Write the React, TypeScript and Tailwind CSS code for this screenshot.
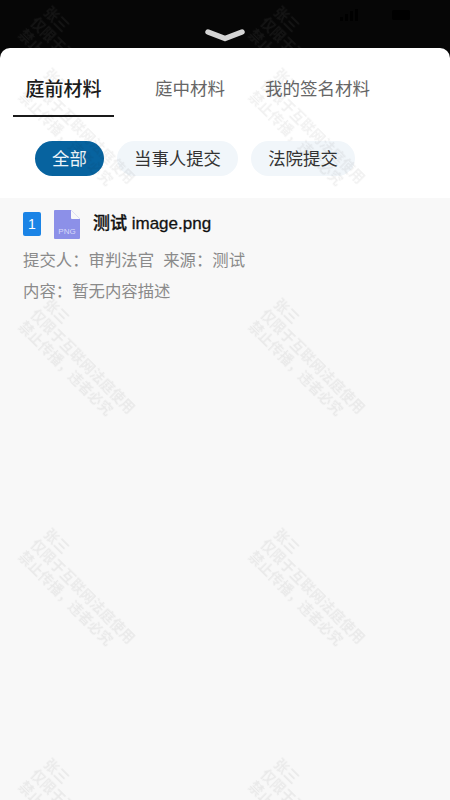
const cjk = "font-['Noto_Sans_CJK_SC','Noto_Sans',sans-serif]";

function Watermark({ color, rows, top }: { color: string; rows: number; top: string }) {
  const cells = Array.from({ length: rows * 2 });
  return (
    <div className={`pointer-events-none absolute left-[-31px] grid grid-cols-[230px_230px] auto-rows-[230px] ${top}`}>
      {cells.map((_, i) => (
        <div key={i} className="flex items-center justify-center">
          <div className={`w-[142px] shrink-0 rotate-45 whitespace-nowrap text-[14px] leading-[17px] font-bold blur-[0.7px] ${color}`}>
            <div className="pl-[2px]">张三</div>
            <div>仅限于互联网法庭使用</div>
            <div>禁止传播，违者必究</div>
          </div>
        </div>
      ))}
    </div>
  );
}

function Pill({ label, active, className }: { label: string; active?: boolean; className: string }) {
  return (
    <div
      className={`flex h-[35px] items-center justify-center rounded-full text-[17.4px] ${
        active ? "bg-[#07639f] text-[#eef5fa]" : "bg-[#f1f6fa] text-[#333333]"
      } ${className}`}
    >
      {label}
    </div>
  );
}

export default function App() {
  return (
    <div className={`relative flex h-[800px] w-[450px] flex-col overflow-hidden bg-[#060606] ${cjk}`}>
      <Watermark color="text-white/[0.06]" rows={1} top="top-[-46px]" />

      <header className="relative flex h-[48px] shrink-0 items-end justify-center pb-[6px]">
        <svg width="40" height="14" viewBox="0 0 40 14" fill="none">
          <path d="M3 4 L20 10.5 L37 4" stroke="#d4d4d4" strokeWidth="5.5" strokeLinecap="round" strokeLinejoin="round" />
        </svg>
        <svg className="absolute right-[40px] top-[9px]" width="70" height="12" viewBox="0 0 70 12" fill="#000">
          <rect x="0" y="8" width="3" height="4" />
          <rect x="5" y="5" width="3" height="7" />
          <rect x="10" y="2" width="3" height="10" />
          <rect x="15" y="0" width="3" height="12" />
          <rect x="52" y="1" width="18" height="10" rx="2" />
        </svg>
      </header>

      <main className="relative flex min-h-0 flex-1 flex-col overflow-hidden rounded-t-[10px] bg-white">
        <nav className="flex h-[69px] shrink-0 items-start pl-[13px] pt-[24px]">
          <div className="flex h-[45px] w-[101px] justify-center border-b-[2.5px] border-[#1a1a1a]">
            <span className="text-[19px] leading-[32px] font-medium text-[#1c1c1c]">庭前材料</span>
          </div>
          <span className="ml-[41px] text-[17.5px] leading-[32px] text-[#666666]">庭中材料</span>
          <span className="ml-[40px] text-[17.5px] leading-[32px] text-[#666666]">我的签名材料</span>
        </nav>

        <div className="flex h-[81px] shrink-0 gap-[13px] pl-[35px] pt-[24px]">
          <Pill label="全部" active className="w-[69px]" />
          <Pill label="当事人提交" className="w-[121px]" />
          <Pill label="法院提交" className="w-[104px]" />
        </div>

        <section className="flex-1 bg-[#f8f8f8] pl-[23px] pt-[12px]">
          <div className="flex h-[28px] items-center">
            <div className="flex h-[24px] w-[18px] items-center justify-center rounded-[2px] bg-[#1b84e6] font-['Liberation_Sans',sans-serif] text-[14px] text-white">
              1
            </div>
            <div className="relative ml-[13px] h-[29px] w-[26px]">
              <svg width="26" height="29" viewBox="0 0 26 29">
                <path d="M1 0 H17 L26 9 V28 a1 1 0 0 1 -1 1 H1 a1 1 0 0 1 -1 -1 V1 a1 1 0 0 1 1 -1 Z" fill="#8c90e8" />
                <path d="M17 0 L26 9 H18 a1 1 0 0 1 -1 -1 Z" fill="#f8f8f8" />
              </svg>
              <span className="absolute bottom-[2px] left-0 w-full text-center font-['Liberation_Sans',sans-serif] text-[8px] leading-[10px] text-[#d8daf8]">PNG</span>
            </div>
            <span className="ml-[13px] font-['Liberation_Sans','Noto_Sans_CJK_SC',sans-serif] text-[17px] leading-[24px] font-medium text-[#111111] [-webkit-text-stroke:0.3px_#111111]">测试 image.png</span>
          </div>
          <p className="mt-[6px] flex h-[31px] gap-[9px] text-[16.4px] leading-[31px] text-[#8a8a8a]">
            <span>提交人：审判法官</span>
            <span>来源：测试</span>
          </p>
          <p className="h-[31px] text-[16.4px] leading-[31px] text-[#8a8a8a]">内容：暂无内容描述</p>
        </section>
      </main>

      <Watermark color="text-black/[0.06]" rows={4} top="top-[16px]" />
    </div>
  );
}
